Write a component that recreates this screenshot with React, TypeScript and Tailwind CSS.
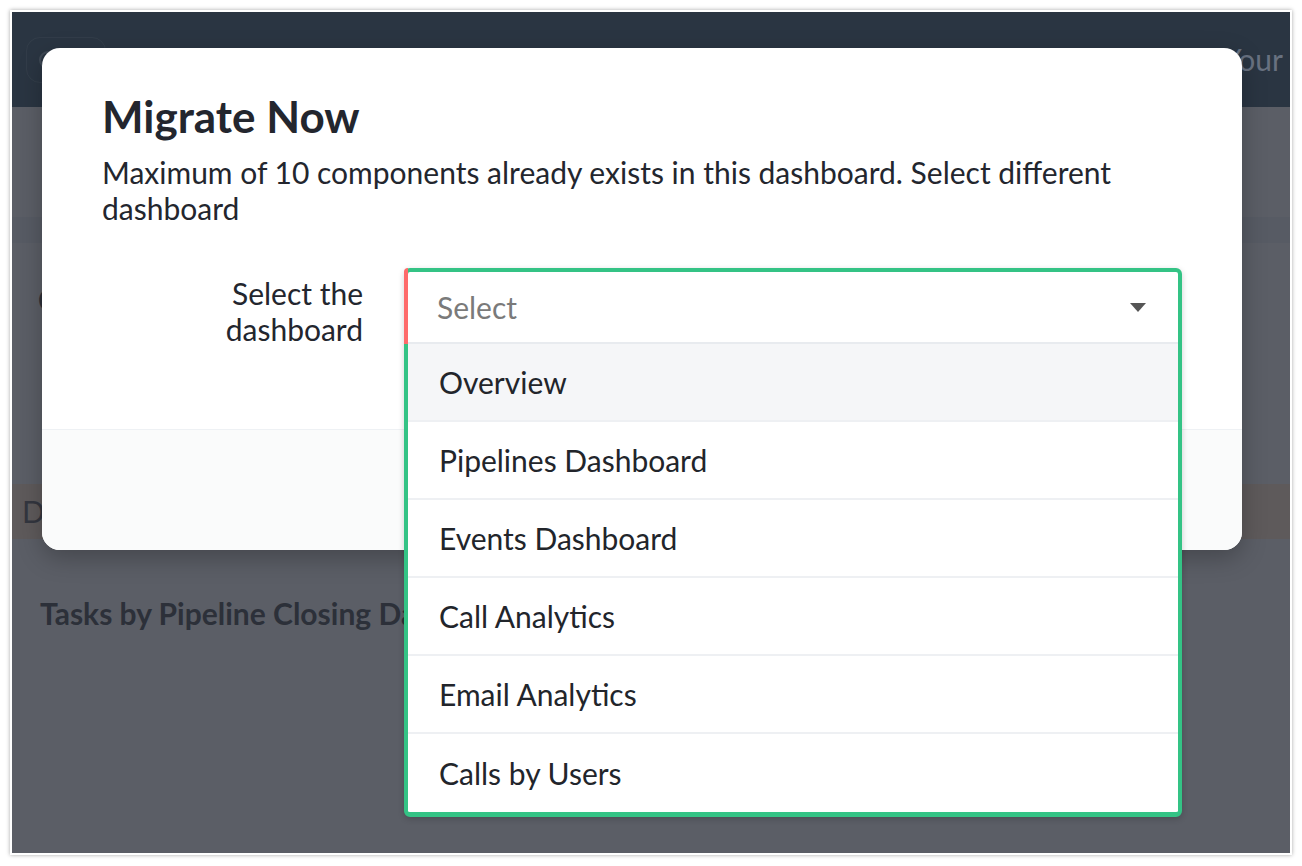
const items = [
  'Overview',
  'Pipelines Dashboard',
  'Events Dashboard',
  'Call Analytics',
  'Email Analytics',
  'Calls by Users',
]

export default function App() {
  return (
    <div className="h-[866px] w-[1302px] bg-white pl-[10px] pt-[10px] font-['Lato','Noto_Sans',sans-serif]">
      <div className="h-[845px] w-[1282px] border-2 border-white shadow-[0_0_4px_rgba(0,0,0,0.35)]">
        <div className="relative h-full w-full overflow-hidden bg-[#5b5e66]">
          <Backdrop />
          <MigrateModal />
        </div>
      </div>
    </div>
  )
}

function Backdrop() {
  return (
    <div className="flex h-full flex-col">
      <div className="flex h-[95px] items-center justify-between bg-[#2a3542] pl-[14px] pr-[7px]">
        <div className="flex h-[46px] w-[80px] items-center rounded-[14px] border border-white/[0.04] pl-[12px]">
          <div className="h-[18px] w-[18px] rounded-full border-2 border-white/10" />
        </div>
        <span className="text-[30px] text-[#687180]">Your</span>
      </div>
      <div className="mt-[110px] h-[26px] bg-[#575b64]" />
      <div className="pl-[26px] pt-[38px] text-[30px] font-bold leading-9 text-[#2c3039]">C</div>
      <div className="mt-[167px] flex h-[55px] items-center bg-[#5e5a5b] pl-[10px] text-[30px] text-[#33363f]">
        D
      </div>
      <div className="pl-[28px] pt-[56px] text-[30px] font-bold leading-9 text-[#2c3039]">
        Tasks by Pipeline Closing Date
      </div>
    </div>
  )
}

function MigrateModal() {
  return (
    <div className="absolute left-[30px] top-[36px] w-[1200px] rounded-[18px] bg-white shadow-[0_8px_24px_rgba(0,0,0,0.25)]">
      <div className="h-[381px] px-[60px] pt-[44px]">
        <h2 className="text-[44px] font-bold leading-[48px] text-[#23262e]">Migrate Now</h2>
        <p className="mt-[14px] text-[30px] leading-9 text-[#23262e]">
          Maximum of 10 components already exists in this dashboard. Select different dashboard
        </p>
        <div className="mt-[42px] flex gap-[41px]">
          <label className="w-[261px] pt-[7px] text-right text-[30px] leading-9 text-[#23262e]">
            Select the dashboard
          </label>
          <DashboardSelect />
        </div>
      </div>
      <div className="h-[121px] rounded-b-[18px] border-t border-[#eef1f4] bg-[#fafbfb]" />
    </div>
  )
}

function DashboardSelect() {
  return (
    <div className="relative h-[76px] flex-1">
      <div className="absolute left-0 right-0 top-0 z-10 rounded-[6px] border-4 border-b-[5px] border-[#34c385] bg-white shadow-[0_2px_6px_rgba(0,0,0,0.18)]">
        <div className="relative flex h-[72px] items-center justify-between border-b-2 border-[#e8ebef] pl-[29px] pr-[32px]">
          <span className="absolute -left-[4px] -top-[4px] bottom-[-2px] w-[4px] rounded-tl-[6px] bg-[#fe6b6b]" />
          <span className="text-[30px] leading-9 text-[#7a7a7a]">Select</span>
          <CaretIcon />
        </div>
        <ul>
          {items.map((item, i) => (
            <li
              key={item}
              className={
                'flex h-[78px] items-center pl-[31px] text-[30px] leading-9 text-[#22252b] ' +
                (i === 0 ? 'bg-[#f5f6f8] ' : '') +
                (i < items.length - 1 ? 'border-b-2 border-[#eef0f3]' : '')
              }
            >
              {item}
            </li>
          ))}
        </ul>
      </div>
    </div>
  )
}

function CaretIcon() {
  return (
    <svg width="16" height="9" viewBox="0 0 16 9" aria-hidden>
      <path d="M0 0h16L8 9z" fill="#555" />
    </svg>
  )
}
